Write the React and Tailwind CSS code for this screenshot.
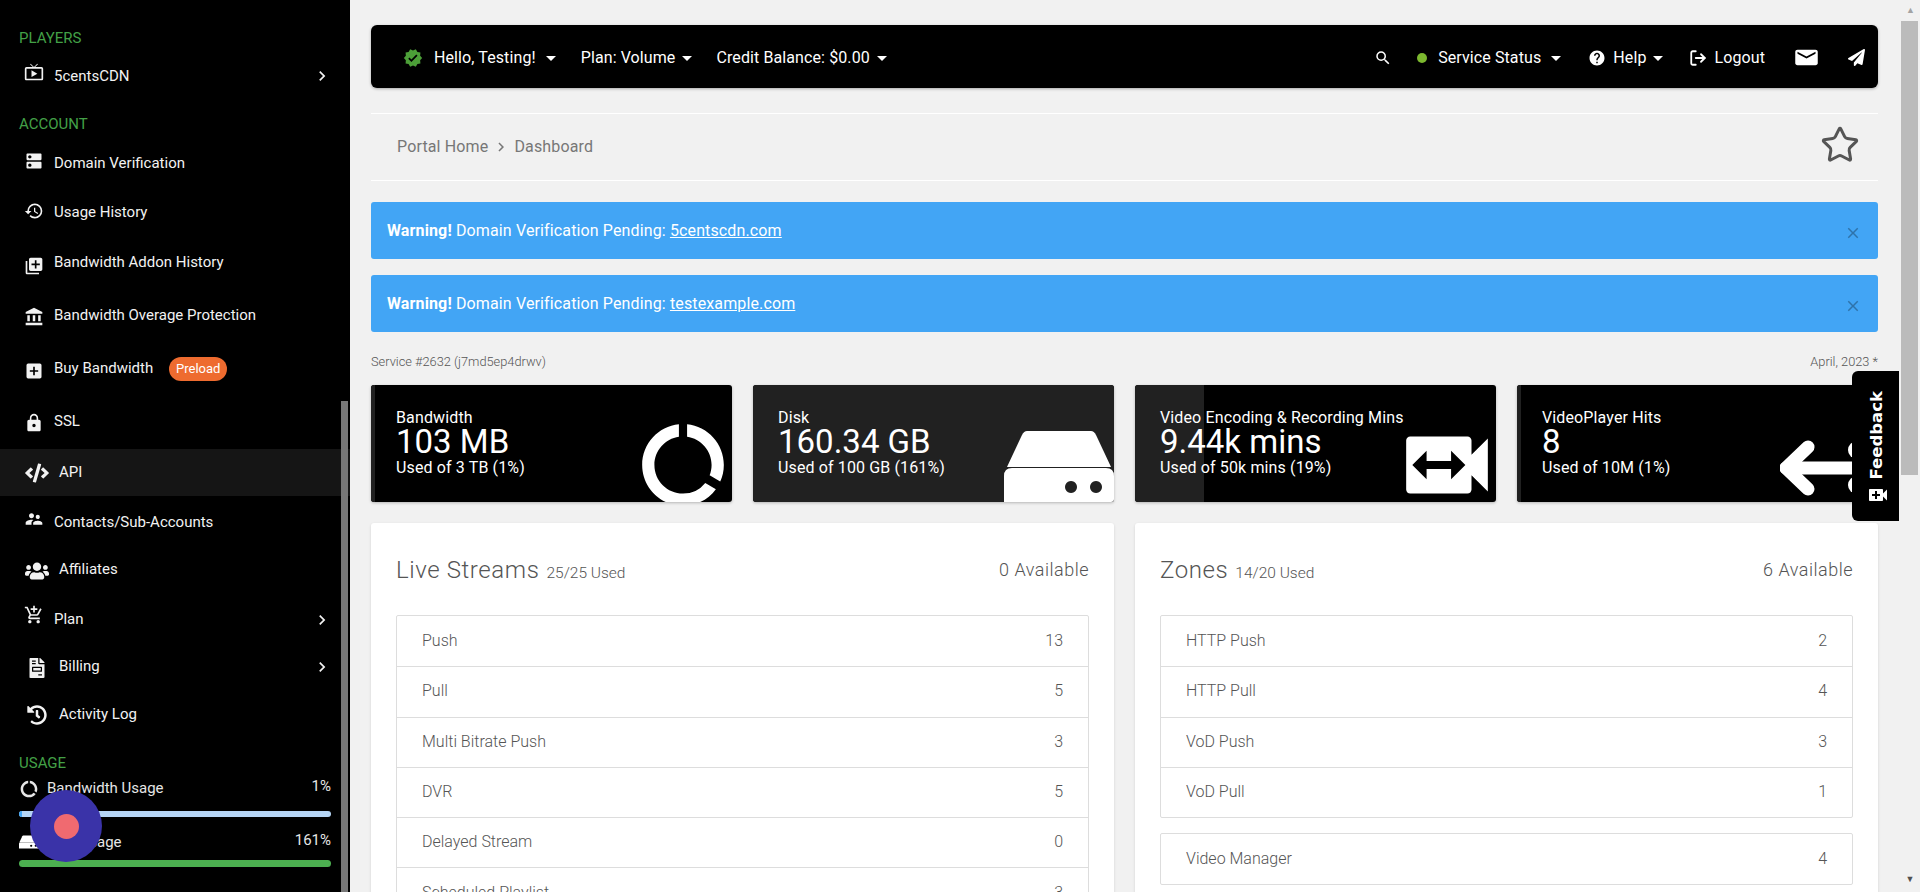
import { FaCode, FaUsers, FaFileInvoice, FaHistory, FaPaperPlane } from 'react-icons/fa';
import {
  MdLiveTv, MdDns, MdHistory, MdLibraryAdd, MdAccountBalance, MdAddBox, MdLock, MdSupervisorAccount,
  MdAddShoppingCart, MdDataUsage, MdSwitchVideo, MdVideoCall, MdVerified, MdSearch, MdHelp, MdEmail,
  MdChevronRight, MdClose, MdArrowDropDown,
} from 'react-icons/md';
import { LogOut, Star } from 'lucide-react';

// ── Sidebar data ──────────────────────────────────────────────────────────────
const ACCOUNT_ITEMS = [
  { label: 'Domain Verification', icon: MdDns, h: 'h-[49px]', shift: '-translate-y-[3px]' },
  { label: 'Usage History', icon: MdHistory, h: 'h-[49px]', shift: '-translate-y-[2px]' },
  { label: 'Bandwidth Addon History', icon: MdLibraryAdd, h: 'h-[51px]', shift: 'translate-y-[3px]' },
  { label: 'Bandwidth Overage Protection', icon: MdAccountBalance, h: 'h-[54px]', shift: 'translate-y-[2px]' },
  { label: 'Buy Bandwidth', icon: MdAddBox, h: 'h-[53px]', shift: 'translate-y-[2px]', badge: 'Preload' },
  { label: 'SSL', icon: MdLock, h: 'h-[54px]', shift: 'translate-y-[1px]', text: '-translate-y-[1px]' },
  { label: 'API', icon: FaCode, h: 'h-[47px]', pad: 'w-[59px] pl-[25px]', active: true, size: 24 },
  { label: 'Contacts/Sub-Accounts', icon: MdSupervisorAccount, h: 'h-[52px]', shift: '-translate-y-[3px]' },
  { label: 'Affiliates', icon: FaUsers, h: 'h-[42px]', pad: 'w-[59px] pl-[25px]', size: 24, shift: 'translate-y-[2px]' },
  { label: 'Plan', icon: MdAddShoppingCart, h: 'h-[58px]', chevron: true, shift: '-translate-y-[4px]' },
  { label: 'Billing', icon: FaFileInvoice, h: 'h-[36px]', pad: 'w-[59px] pl-[27px]', chevron: true, size: 20, shift: 'translate-y-[2px]' },
  { label: 'Activity Log', icon: FaHistory, h: 'h-[60px]', pad: 'w-[59px] pl-[27px]', size: 20, shift: 'translate-y-[1px]' },
];

const STATS = [
  { title: 'Bandwidth', value: '103 MB', sub: 'Used of 3 TB (1%)', pct: 1, icon: 'usage' },
  { title: 'Disk', value: '160.34 GB', sub: 'Used of 100 GB (161%)', pct: 100, icon: 'disk' },
  { title: 'Video Encoding & Recording Mins', value: '9.44k mins', sub: 'Used of 50k mins (19%)', pct: 19, icon: 'video' },
  { title: 'VideoPlayer Hits', value: '8', sub: 'Used of 10M (1%)', pct: 1, icon: 'player' },
];

// ── Small drawings ────────────────────────────────────────────────────────────
function DiskIcon({ className }) {
  return (
    <svg viewBox="0 0 110 71" className={className} fill="white">
      <path d="M23 0h64q3 0 5 4l15 32H3L18 4q2-4 5-4z" />
      <path fillRule="evenodd" d="M8 37h94q8 0 8 8v26H0V45q0-8 8-8zM67 50a6 6 0 1 0 .01 0zM92 50a6 6 0 1 0 .01 0z" />
    </svg>
  );
}

function PlayerIcon() {
  return (
    <svg viewBox="0 0 98 60" className="absolute left-[263px] top-[53px] w-[98px] h-[60px]" fill="none" stroke="white" strokeLinecap="round" strokeLinejoin="round">
      <path d="M6 30H80" strokeWidth="13" />
      <path d="M28 9L6 30L28 51" strokeWidth="13" />
      <circle cx="77" cy="12" r="9" fill="white" stroke="none" />
      <circle cx="77" cy="47" r="9" fill="white" stroke="none" />
    </svg>
  );
}

// ── Sidebar ───────────────────────────────────────────────────────────────────
function SectionLabel({ children, className = '' }) {
  return <div className={`h-[20px] flex items-center pl-[19px] text-[15px] text-[#43a047] ${className}`}>{children}</div>;
}

function NavRow({ item }) {
  const Icon = item.icon;
  return (
    <div className={`${item.h} flex items-center text-[15px] text-[#f2f2f2] ${item.active ? 'bg-[#151515]' : ''}`}>
      <span className={`shrink-0 ${item.pad || 'w-[54px] pl-[24px]'} ${item.shift || ''}`}>
        <Icon size={item.size || 20} color="#f2f2f2" />
      </span>
      <span className={item.text || ''}>{item.label}</span>
      {item.badge && (
        <span className="ml-[16px] w-[58px] h-[24px] rounded-full bg-[#ee6b2f] text-white text-[13px] flex items-center justify-center">{item.badge}</span>
      )}
      {item.chevron && <MdChevronRight size={20} className="ml-auto mr-[18px] translate-y-[1px]" />}
    </div>
  );
}

function UsageRow({ icon, label, pct, className = '' }) {
  return (
    <div className={`h-[26px] mx-[19px] flex items-center justify-between text-[15px] text-[#e6e6e6] ${className}`}>
      <span className="flex items-center gap-[8px]">{icon}{label}</span>
      <span className="-translate-y-[2px]">{pct}</span>
    </div>
  );
}

function Sidebar() {
  return (
    <aside className="relative w-[350px] shrink-0 bg-black text-white overflow-hidden pt-[28px]">
      <SectionLabel>PLAYERS</SectionLabel>
      <div className="h-[54px] flex items-center text-[15px] text-[#f2f2f2]">
        <span className="w-[54px] pl-[24px] shrink-0 -translate-y-[3px]"><MdLiveTv size={20} /></span>
        <span className="translate-y-[1px]">5centsCDN</span>
        <MdChevronRight size={20} className="ml-auto mr-[18px] translate-y-[1px]" />
      </div>
      <SectionLabel className="mt-[12px] mb-[5px]">ACCOUNT</SectionLabel>
      {ACCOUNT_ITEMS.map((item) => <NavRow key={item.label} item={item} />)}

      {/* Usage */}
      <SectionLabel className="mt-[9px] mb-[2px]">USAGE</SectionLabel>
      <UsageRow icon={<MdDataUsage size={20} className="translate-y-[1px]" />} label="Bandwidth Usage" pct="1%" />
      <div className="mx-[19px] mt-[10px] h-[6px] rounded-full bg-[#b5d5f5] overflow-hidden">
        <div className="h-full bg-[#42a5f5]" style={{ width: '1%' }} />
      </div>
      <UsageRow icon={<DiskIcon className="w-[20px] h-[14px]" />} label="Disk Usage" pct="161%" className="mt-[12px]" />
      <div className="mx-[19px] mt-[5px] h-[7px] rounded-full bg-[#4caf50]" />

      {/* Scroll thumb */}
      <div className="absolute left-[341px] top-[401px] bottom-0 w-[7px] bg-[#777]" />
    </aside>
  );
}

// ── Top bar ───────────────────────────────────────────────────────────────────
function Caret({ className = '' }) {
  return <MdArrowDropDown size={24} className={`shrink-0 ${className}`} />;
}

function TopBar() {
  return (
    <div className="h-[63px] pt-[2px] rounded-[6px] bg-black text-white text-[16px] tracking-[0.1px] flex items-center justify-between shadow-[0_1px_3px_rgba(0,0,0,0.3)]">
      <div className="flex items-center pl-[32px]">
        <MdVerified size={20} color="#4c9f38" />
        <span className="ml-[11px]">Hello, Testing!</span>
        <Caret className="ml-[3px]" />
        <span className="ml-[18px]">Plan: Volume</span>
        <Caret />
        <span className="ml-[17px]">Credit Balance: $0.00</span>
        <Caret />
      </div>
      <div className="flex items-center pr-[13px]">
        <MdSearch size={18} />
        <span className="ml-[25px] w-[10px] h-[10px] rounded-full bg-[#7cb82f]" />
        <span className="ml-[11px]">Service Status</span>
        <Caret className="ml-[3px]" />
        <MdHelp size={18} className="ml-[20px]" />
        <span className="ml-[7px]">Help</span>
        <Caret />
        <LogOut size={18} strokeWidth={2.4} className="ml-[19px]" />
        <span className="ml-[7px]">Logout</span>
        <MdEmail size={27} className="ml-[28px] scale-y-[0.85]" />
        <FaPaperPlane size={17} className="ml-[28px]" />
      </div>
    </div>
  );
}

// ── Dashboard pieces ──────────────────────────────────────────────────────────
function Alert({ domain }) {
  return (
    <div className="h-[57px] rounded-[3px] bg-[#42a5f5] text-white text-[16px] tracking-[0.13px] flex items-center justify-between pl-[16px] pr-[16px]">
      <p><strong className="font-bold">Warning!</strong> Domain Verification Pending: <span className="underline">{domain}</span></p>
      <MdClose size={18} className="text-[#000]/30 translate-y-[2px]" />
    </div>
  );
}

function StatCard({ stat }) {
  return (
    <div className="relative h-[117px] rounded-[3px] bg-black text-white overflow-hidden shadow-[0_1px_3px_rgba(0,0,0,0.25)]">
      <div className="absolute inset-y-0 left-0 bg-[#212121]" style={{ width: `${stat.pct}%` }} />
      <div className="relative pl-[25px] pt-[24px] tracking-[0.13px]">
        <div className="h-[18px] leading-[18px] text-[16px]">{stat.title}</div>
        <div className="h-[31px] leading-[30px] text-[33px] tracking-normal">{stat.value}</div>
        <div className="h-[20px] leading-[20px] text-[16px]">{stat.sub}</div>
      </div>
      {stat.icon === 'usage' && <MdDataUsage size={98} className="absolute right-0 top-[31px]" />}
      {stat.icon === 'video' && <MdSwitchVideo size={98} className="absolute right-0 top-[31px]" />}
      {stat.icon === 'disk' && <DiskIcon className="absolute right-0 top-[46px] w-[110px] h-[71px]" />}
      {stat.icon === 'player' && <PlayerIcon />}
    </div>
  );
}

function ListGroup({ rows, className = '' }) {
  return (
    <div className={`border border-[#ddd] rounded-[2px] ${className}`}>
      {rows.map(([label, n], i) => (
        <div key={label} className={`h-[50.3px] pb-[1px] flex items-center justify-between px-[25px] text-[16px] font-light text-[#555] ${i ? 'border-t border-[#ddd]' : ''}`}>
          <span>{label}</span>
          <span>{n}</span>
        </div>
      ))}
    </div>
  );
}

function Panel({ title, used, available, children }) {
  return (
    <section className="bg-white rounded-[3px] px-[25px] pt-[27px] shadow-[0_1px_3px_rgba(0,0,0,0.12)]">
      <div className="h-[40px] mb-[25px] flex items-center justify-between font-light text-[#555]">
        <p className="flex items-baseline">
          <span className="text-[24px] tracking-[0.6px]">{title}</span>
          <span className="ml-[7px] text-[15.5px]">{used}</span>
        </p>
        <span className="text-[18px] tracking-[0.5px] -translate-y-[1px]">{available}</span>
      </div>
      {children}
    </section>
  );
}

// ── Page ──────────────────────────────────────────────────────────────────────
export default function App() {
  return (
    <div className="relative flex h-[892px] overflow-hidden bg-[#f1f1f1] font-['Roboto',sans-serif]">
      <Sidebar />

      <main className="flex-1 min-w-0 pl-[21px] pr-[22px] pt-[25px]">
        <TopBar />

        <div className="mt-[25px] h-[68px] border-y border-white flex items-center justify-between pl-[26px] pr-[18px] text-[16px] tracking-[0.15px] text-[#777]">
          <span className="flex items-center">
            Portal Home
            <MdChevronRight size={18} className="mx-[4px]" />
            Dashboard
          </span>
          <Star size={40} strokeWidth={1.8} color="#555" className="-translate-y-[2px]" />
        </div>

        <div className="mt-[21px] flex flex-col gap-[16px]">
          <Alert domain="5centscdn.com" />
          <Alert domain="testexample.com" />
        </div>

        <div className="mt-[20px] h-[20px] flex items-center justify-between text-[12.8px] font-light text-[#555]">
          <span>Service #2632 (j7md5ep4drwv)</span>
          <span>April, 2023 *</span>
        </div>

        <div className="mt-[13px] grid grid-cols-4 gap-[21px]">
          {STATS.map((s) => <StatCard key={s.title} stat={s} />)}
        </div>

        <div className="mt-[21px] grid grid-cols-2 gap-[21px]">
          <Panel title="Live Streams" used="25/25 Used" available="0 Available">
            <ListGroup rows={[['Push', 13], ['Pull', 5], ['Multi Bitrate Push', 3], ['DVR', 5], ['Delayed Stream', 0], ['Scheduled Playlist', 3]]} />
          </Panel>
          <Panel title="Zones" used="14/20 Used" available="6 Available">
            <ListGroup rows={[['HTTP Push', 2], ['HTTP Pull', 4], ['VoD Push', 3], ['VoD Pull', 1]]} />
            <ListGroup rows={[['Video Manager', 4]]} className="mt-[15px]" />
          </Panel>
        </div>
      </main>

      {/* Page scrollbar */}
      <div className="relative w-[20px] shrink-0 bg-[#f1f1f1] pl-[1px]">
        <div className="h-[21px] flex items-center justify-center text-[9px] text-[#a3a3a3]">▲</div>
        <div className="w-[17px] h-[454px] bg-[#bbb]" />
        <div className="absolute bottom-[6px] left-0 right-0 text-center text-[9px] text-[#505050]">▼</div>
      </div>

      {/* Feedback tab */}
      <div className="absolute left-[1852px] top-[371px] w-[47px] h-[150px] rounded-l-[6px] bg-black text-white flex flex-col items-center pl-[4px]">
        <span className="mt-[20px] font-['DejaVu_Sans',sans-serif] font-bold text-[16.5px] [writing-mode:vertical-rl] rotate-180">Feedback</span>
        <MdVideoCall size={24} className="mt-[3px]" />
      </div>

      {/* Recorder widget */}
      <div className="absolute left-[30px] top-[790px] w-[72px] h-[72px] rounded-full bg-[#3a33a8] flex items-center justify-center">
        <div className="w-[25px] h-[25px] rounded-full bg-[#f06a70]" />
      </div>
    </div>
  );
}
